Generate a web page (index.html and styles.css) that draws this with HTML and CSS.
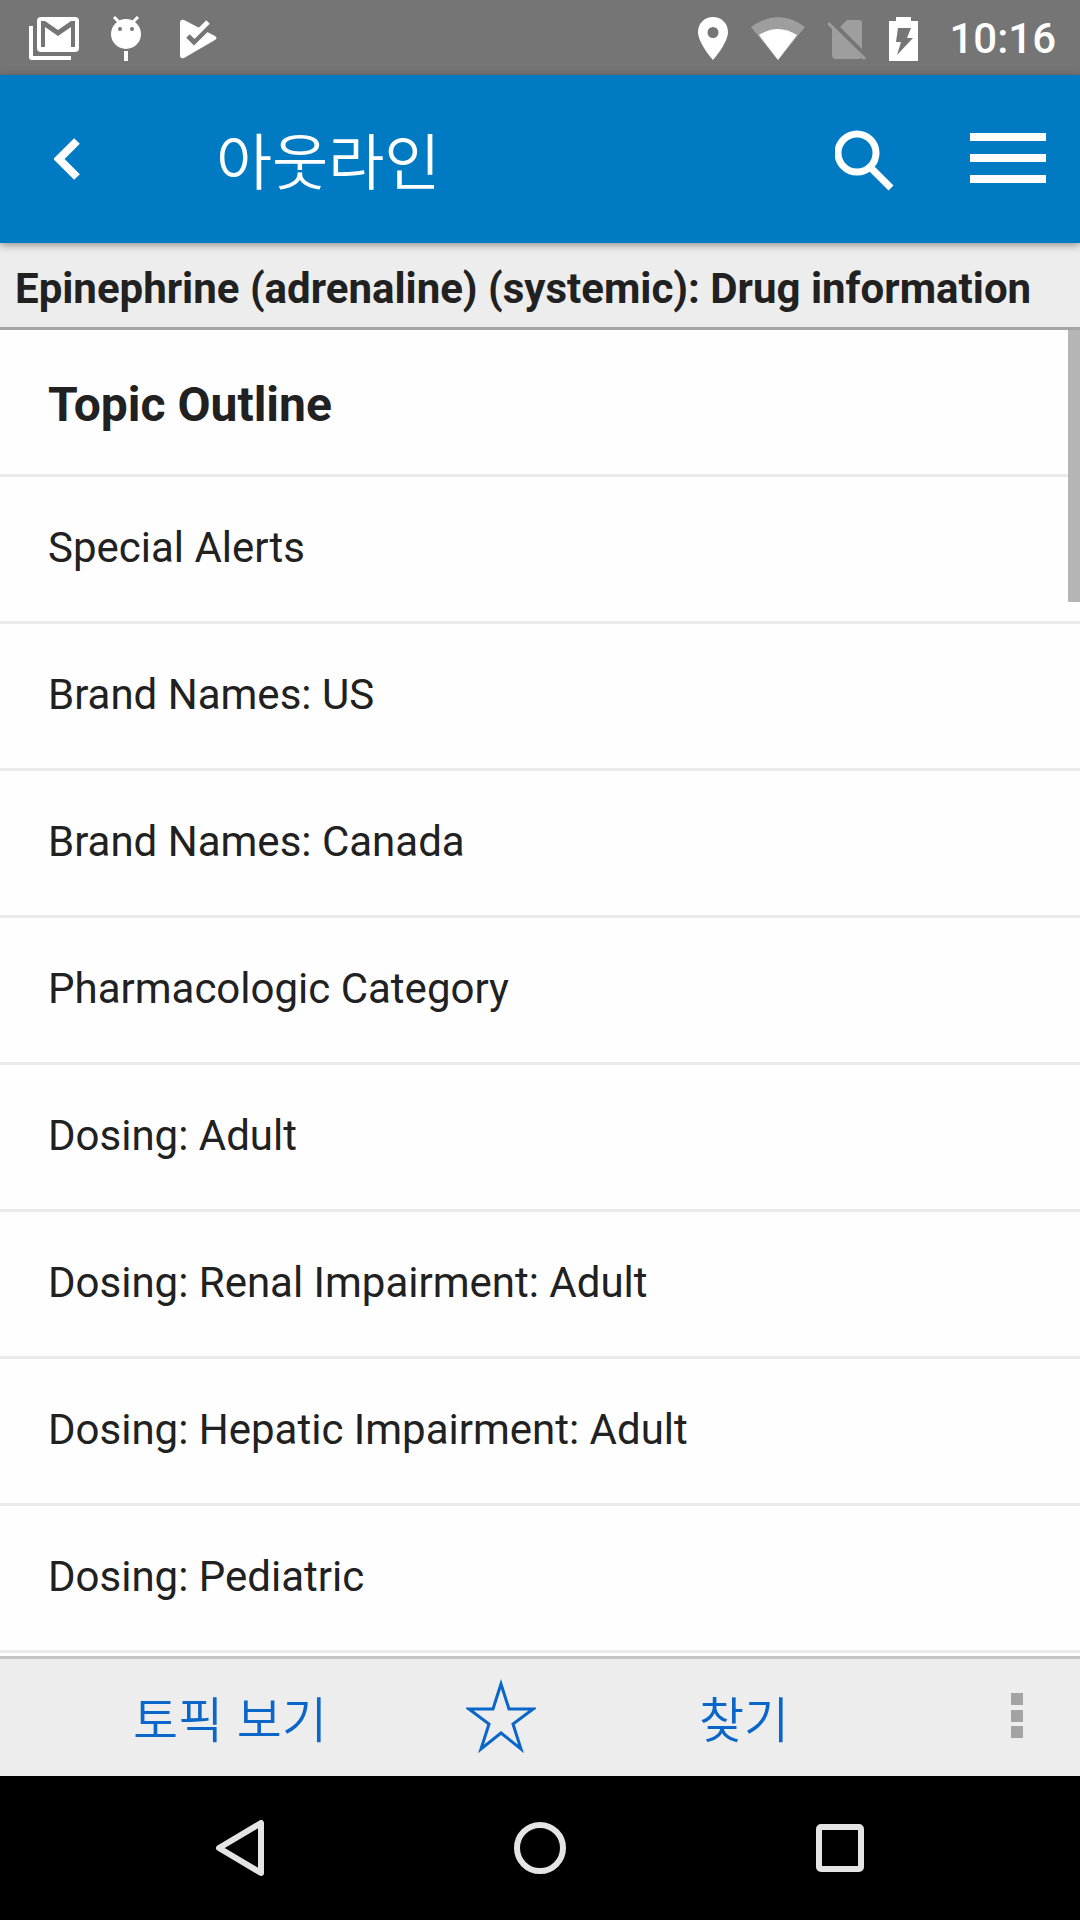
FILE: index.html
```html
<!DOCTYPE html>
<html lang="ko">
<head>
  <meta charset="UTF-8">
  <meta name="viewport" content="width=device-width, initial-scale=1.0">
  <title>아웃라인</title>
  <link rel="stylesheet" href="styles.css">
</head>
<body>

<!-- Status bar -->
<div class="status-bar">
  <div class="notifications">
    <svg width="50" height="44" viewBox="0 0 50 44">
      <path d="M0 9h4v30h38v4H3q-3 0-3-3z" fill="#fff"/>
      <rect x="8" y="0" width="42" height="35" rx="4" fill="#fff"/>
      <path d="M12 30V4h4l13 9 13-9h4v26h-4V10l-13 9-13-9v20z" fill="#757575"/>
    </svg>
    <svg width="32" height="46" viewBox="0 0 32 46">
      <path d="M4 1l6 6M28 1l-6 6" stroke="#fff" stroke-width="3"/>
      <circle cx="16" cy="18" r="15" fill="#fff"/>
      <circle cx="10" cy="13" r="2" fill="#757575"/>
      <circle cx="22" cy="13" r="2" fill="#757575"/>
      <rect x="14" y="35" width="4" height="10" fill="#fff"/>
    </svg>
    <svg width="37" height="40" viewBox="0 0 37 40">
      <path d="M0 4q0-4 4-3l31 16q3 2 0 4L4 39q-4 1-4-3z" fill="#fff"/>
      <path d="M8 17l6 6L32 5" fill="none" stroke="#757575" stroke-width="5"/>
      <path d="M13 18L28 3" stroke="#fff" stroke-width="5"/>
    </svg>
  </div>
  <div class="system">
    <svg width="30" height="44" viewBox="0 0 30 44">
      <path d="M15 0C7 0 0 6 0 15c0 11 15 28 15 28s15-17 15-28C30 6 23 0 15 0zm0 10a5 5 0 0 1 0 11 5 5 0 0 1 0-11z" fill="#fff" fill-rule="evenodd"/>
    </svg>
    <svg width="54" height="44" viewBox="0 0 54 44">
      <path d="M0 10Q27-10 54 10L27 43z" fill="#9e9e9e"/>
      <path d="M8 18Q27 6 46 18L27 43z" fill="#fff"/>
    </svg>
    <svg width="38" height="44" viewBox="1 0 38 44">
      <path d="M6 11l29 30q-1 1-3 1H9q-4 0-4-4V11zM13 10l7-7h12q3 0 3 3v26z" fill="#9e9e9e"/>
      <path d="M1 6l37 36" stroke="#9e9e9e" stroke-width="3"/>
    </svg>
    <svg width="30" height="44" viewBox="0 0 30 44">
      <path d="M0 4h7V0h15v4h7v40H0z" fill="#fff"/>
      <path d="M9 11h13l-4 10h6L8 38l4-13H7z" fill="#757575"/>
    </svg>
    <span class="clock">10:16</span>
  </div>
</div>

<!-- App header -->
<header class="header">
  <button class="icon-button back" aria-label="뒤로">
    <svg width="28" height="44" viewBox="0 0 28 44">
      <path d="M23 4L5 22l18 18" fill="none" stroke="#fff" stroke-width="8"/>
    </svg>
  </button>
  <h1 class="header-title">아웃라인</h1>
  <button class="icon-button" aria-label="검색">
    <svg width="60" height="66" viewBox="0 -4 60 66">
      <circle cx="22" cy="23" r="19" fill="none" stroke="#fff" stroke-width="7"/>
      <path d="M35 37l21 21" stroke="#fff" stroke-width="7"/>
    </svg>
  </button>
  <button class="icon-button" aria-label="메뉴">
    <svg width="76" height="54" viewBox="0 1 76 54">
      <path d="M0 6h76M0 27h76M0 48h76" stroke="#fff" stroke-width="8"/>
    </svg>
  </button>
</header>

<h2 class="topic-title">Epinephrine (adrenaline) (systemic): Drug information</h2>

<!-- Outline list -->
<main class="outline">
  <h3 class="outline-heading">Topic Outline</h3>
  <ul class="outline-list">
    <li><a href="#">Special Alerts</a></li>
    <li><a href="#">Brand Names: US</a></li>
    <li><a href="#">Brand Names: Canada</a></li>
    <li><a href="#">Pharmacologic Category</a></li>
    <li><a href="#">Dosing: Adult</a></li>
    <li><a href="#">Dosing: Renal Impairment: Adult</a></li>
    <li><a href="#">Dosing: Hepatic Impairment: Adult</a></li>
    <li><a href="#">Dosing: Pediatric</a></li>
  </ul>
  <div class="scrollbar"></div>
</main>

<!-- Bottom toolbar -->
<footer class="toolbar">
  <button class="tool">토픽 보기</button>
  <button class="tool" aria-label="즐겨찾기">
    <svg width="70" height="74" viewBox="0 0 70 74">
      <path d="M35 5l8 25h24L47 45l8 25-20-16-20 16 8-25L3 30h24z" fill="none" stroke="#0a66c8" stroke-width="3"/>
    </svg>
  </button>
  <button class="tool">찾기</button>
  <button class="tool more" aria-label="더보기">
    <svg width="12" height="46" viewBox="0 0 12 46">
      <path d="M0 0h12v12H0zM0 17h12v12H0zM0 33h12v12H0z" fill="#a3a3a3"/>
    </svg>
  </button>
</footer>

<!-- Android navigation -->
<nav class="nav-bar">
  <button class="nav-button" aria-label="Back">
    <svg width="50" height="56" viewBox="0 0 50 56">
      <path d="M46 3v50L4 28z" fill="none" stroke="#e4e4e4" stroke-width="6" stroke-linejoin="round"/>
    </svg>
  </button>
  <button class="nav-button" aria-label="Home">
    <svg width="52" height="52" viewBox="0 0 52 52">
      <circle cx="26" cy="26" r="23" fill="none" stroke="#e4e4e4" stroke-width="6"/>
    </svg>
  </button>
  <button class="nav-button" aria-label="Recent apps">
    <svg width="48" height="48" viewBox="0 0 48 48">
      <rect x="3" y="3" width="42" height="42" rx="2" fill="none" stroke="#e4e4e4" stroke-width="6"/>
    </svg>
  </button>
</nav>

</body>
</html>
```
FILE: styles.css
```css
* {
  box-sizing: border-box;
}
body {
  display: flex;
  flex-direction: column;
  min-height: 100vh;
  margin: 0;
  font-family: Roboto, "Noto Sans CJK KR", sans-serif;
  font-size: 42px;
  color: #212121;
  background-color: #fefefe;
}
h1, h2, h3, ul {
  margin: 0;
  padding: 0;
}
button {
  padding: 0;
  border: none;
  background: none;
  font-family: inherit;
  cursor: pointer;
}
svg {
  display: block;
}
.status-bar {
  display: flex;
  justify-content: space-between;
  height: 75px;
  padding: 2px 24px 0 29px;
  background-color: #757575;
}
.notifications, .system {
  display: flex;
  align-items: center;
}
.notifications {
  gap: 31px;
}
.notifications svg:last-child {
  margin-left: 7px;
}
.system {
  gap: 23px;
}
.clock {
  margin-left: 7px;
  font-weight: 500;
  color: #fff;
}
.header {
  display: flex;
  align-items: center;
  height: 168px;
  padding: 0 34px 0 54px;
  background-color: #007ac3;
  box-shadow: 0 2px 8px rgba(0, 0, 0, 0.4);
  position: relative;
}
.header-title {
  flex: 1;
  margin-left: 134px;
  font-family: "Noto Sans CJK KR", sans-serif;
  font-size: 61px;
  font-weight: 350;
  line-height: 72px;
  color: #fff;
}
.icon-button + .icon-button {
  margin-left: 75px;
}
.topic-title {
  padding: 21px 15px 13px;
  border-bottom: 3px solid #a6a6a6;
  background-color: #ededed;
  font-size: 42px;
  line-height: 50px;
  white-space: nowrap;
}
.outline {
  position: relative;
  flex: 1;
}
.outline-heading, .outline-list a {
  display: block;
  padding: 47px 48px 49px;
  border-bottom: 3px solid #ebebeb;
  line-height: 48px;
}
.outline-heading {
  font-size: 48px;
  padding: 51px 48px 45px;
}
.outline-list {
  list-style: none;
}
.outline-list a {
  color: inherit;
  text-decoration: none;
}
.scrollbar {
  position: absolute;
  top: 0;
  right: 0;
  width: 12px;
  height: 272px;
  background-color: #b5b5b5;
}
.toolbar {
  display: grid;
  grid-template-columns: 460fr 82fr 404fr 134fr;
  height: 120px;
  padding-bottom: 3px;
  border-top: 3px solid #c4c4c4;
  background-color: #ededed;
}
.tool {
  display: flex;
  align-items: center;
  justify-content: center;
  font-family: "Noto Sans CJK KR", sans-serif;
  font-size: 49px;
  font-weight: 350;
  color: #0a66c8;
}
.more {
  padding-left: 8px;
}
.nav-bar {
  display: flex;
  height: 144px;
  padding: 0 90px;
  background-color: #000;
}
.nav-button {
  display: flex;
  flex: 1;
  align-items: center;
  justify-content: center;
}
```
